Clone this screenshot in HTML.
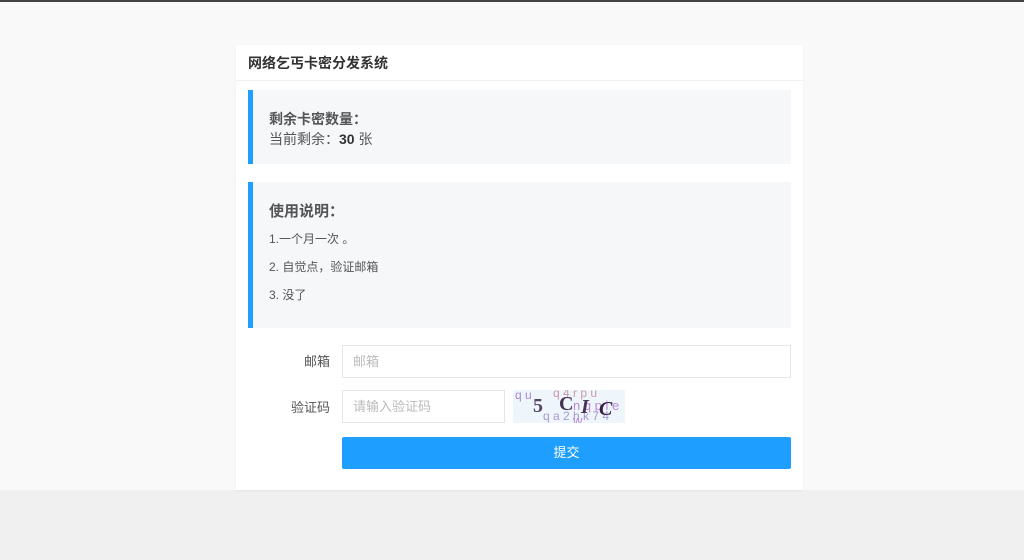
<!DOCTYPE html>
<html><head><meta charset="utf-8"><style>
*{margin:0;padding:0;box-sizing:border-box}
body{width:1024px;height:560px;background:#f0f0f0;font-family:"Liberation Sans","Noto Sans CJK SC",sans-serif;position:relative;overflow:hidden}
.top{position:absolute;left:0;top:0;width:1024px;height:490px;background:#f9f9f9;border-top:2px solid #444}
.card{position:absolute;left:236px;top:45px;width:567px;height:445px;background:#fff;box-shadow:0 1px 2px rgba(0,0,0,.05)}
.hd{height:36px;border-bottom:1px solid #f0f0f0;padding-left:12px;line-height:36px;font-size:14px;font-weight:bold;color:#333}
.q{position:absolute;left:12px;background:#f5f7f9;border-left:5px solid #1e9fff;width:543px;padding-left:16px;color:#555}
.lbl{position:absolute;font-size:13px;color:#555;text-align:right;width:60px}
.inp{position:absolute;border:1px solid #e6e6e6;height:33px;font-size:13px;color:#bbb;padding-left:10px;line-height:31px;background:#fff}
.btn{position:absolute;left:106px;top:392px;width:449px;height:32px;background:#1e9fff;color:#fff;font-size:13px;text-align:center;line-height:32px;border-radius:2px}
</style></head><body>
<div class="top"></div>
<div class="card">
<div class="hd">网络乞丐卡密分发系统</div>
<div class="q" style="top:45px;height:74px">
<div style="position:absolute;top:19px;left:16px;font-size:14px;font-weight:bold;color:#555">剩余卡密数量：</div>
<div style="position:absolute;top:39px;left:16px;font-size:14px;color:#555">当前剩余：<b style="color:#333">30</b> 张</div>
</div>
<div class="q" style="top:137px;height:146px">
<div style="position:absolute;top:18px;left:16px;font-size:15px;font-weight:bold;color:#555">使用说明：</div>
<div style="position:absolute;top:48px;left:16px;font-size:12px">1.一个月一次 。</div>
<div style="position:absolute;top:76px;left:16px;font-size:12px">2. 自觉点，验证邮箱</div>
<div style="position:absolute;top:104px;left:16px;font-size:12px">3. 没了</div>
</div>
<div class="lbl" style="left:34px;top:306px">邮箱</div>
<div class="inp" style="left:106px;top:300px;width:449px">邮箱</div>
<div class="lbl" style="left:34px;top:352px">验证码</div>
<div class="inp" style="left:106px;top:345px;width:163px">请输入验证码</div>
<div style="position:absolute;left:277px;top:345px;width:112px;height:33px;background:#eef6fb;overflow:hidden;font-family:'Liberation Sans',sans-serif">
<span style="position:absolute;left:2px;top:-2px;font-size:12px;color:#a8c">q u</span>
<span style="position:absolute;left:40px;top:-4px;font-size:12px;color:#c9a">q 4 r p u</span>
<span style="position:absolute;left:30px;top:19px;font-size:12px;color:#a9c">q a 2 h k 7 4</span>
<span style="position:absolute;left:60px;top:8px;font-size:13px;color:#b8d">n q p i e w</span>
<span style="position:absolute;left:20px;top:5px;font-size:20px;font-weight:bold;color:#546;font-family:'Liberation Serif',serif">5</span>
<span style="position:absolute;left:46px;top:3px;font-size:20px;font-weight:bold;color:#435;font-family:'Liberation Serif',serif">C</span>
<span style="position:absolute;left:68px;top:6px;font-size:20px;font-weight:bold;font-style:italic;color:#435;font-family:'Liberation Serif',serif">I</span>
<span style="position:absolute;left:86px;top:8px;font-size:20px;font-weight:bold;font-style:italic;color:#324;font-family:'Liberation Serif',serif">C</span>
</div>
<div class="btn">提交</div>
</div>
</body></html>
